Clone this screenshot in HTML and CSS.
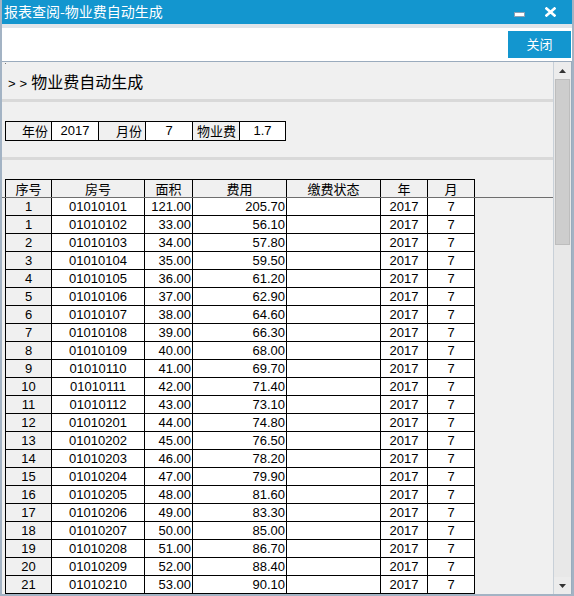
FILE: index.html
```html
<!DOCTYPE html>
<html>
<head>
<meta charset="utf-8">
<link rel="stylesheet" href="styles.css">
</head>
<body>
<div class="window">
  <div class="titlebar">
    <span class="title">报表查阅-物业费自动生成</span>
    <span class="controls">
      <span class="min"></span>
      <svg class="close" width="11" height="10" viewBox="0 0 11 10"><path d="M1.5 1.5 L9.5 8.5 M9.5 1.5 L1.5 8.5" stroke="#fff" stroke-width="2.6" stroke-linecap="square"/></svg>
    </span>
  </div>
  <div class="band"></div>
  <div class="toolbar">
    <button class="btn">关闭</button>
  </div>
  <div class="panel">
    <div class="content">
      <div class="dot"></div>
      <div class="heading"><span class="arrows">&gt;&gt;</span>物业费自动生成</div>
      <div class="sep"></div>
      <div class="params">
        <div class="pc lbl">年份</div>
        <div class="pc val">2017</div>
        <div class="pc lbl">月份</div>
        <div class="pc val">7</div>
        <div class="pc lbl">物业费</div>
        <div class="pc val">1.7</div>
      </div>
      <div class="sep sep2"></div>
      <div class="head-wrap">
        <div class="grid head">
          <div>序号</div><div>房号</div><div>面积</div><div>费用</div><div>缴费状态</div><div>年</div><div>月</div>
        </div>
      </div>
      <div class="grid body" id="rows"></div>
    </div>
    <div class="scrollbar">
      <div class="sb-btn up"><svg width="7" height="4" viewBox="0 0 7 4"><path d="M0 4 L3.5 0 L7 4Z" fill="#333"/></svg></div>
      <div class="thumb"></div>
      <div class="track"></div>
      <div class="sb-btn down"><svg width="7" height="4" viewBox="0 0 7 4"><path d="M0 0 L3.5 4 L7 0Z" fill="#333"/></svg></div>
    </div>
  </div>
</div>
<script>
var data=[
["1","01010101","121.00","205.70"],
["1","01010102","33.00","56.10"],
["2","01010103","34.00","57.80"],
["3","01010104","35.00","59.50"],
["4","01010105","36.00","61.20"],
["5","01010106","37.00","62.90"],
["6","01010107","38.00","64.60"],
["7","01010108","39.00","66.30"],
["8","01010109","40.00","68.00"],
["9","01010110","41.00","69.70"],
["10","01010111","42.00","71.40"],
["11","01010112","43.00","73.10"],
["12","01010201","44.00","74.80"],
["13","01010202","45.00","76.50"],
["14","01010203","46.00","78.20"],
["15","01010204","47.00","79.90"],
["16","01010205","48.00","81.60"],
["17","01010206","49.00","83.30"],
["18","01010207","50.00","85.00"],
["19","01010208","51.00","86.70"],
["20","01010209","52.00","88.40"],
["21","01010210","53.00","90.10"]
];
var h="";
data.forEach(function(r){
  h+='<div class="c idx">'+r[0]+'</div><div class="c">'+r[1]+'</div><div class="c num">'+r[2]+'</div><div class="c num">'+r[3]+'</div><div class="c"></div><div class="c">2017</div><div class="c">7</div>';
});
document.getElementById("rows").innerHTML=h;
</script>
</body>
</html>
```

FILE: styles.css
```css
html, body {
  margin: 0;
  padding: 0;
  width: 574px;
  height: 596px;
  overflow: hidden;
  background: #fff;
}
.window {
  width: 574px;
  height: 596px;
  box-sizing: border-box;
  border-left: 2px solid #a3b3c4;
  border-right: 2px solid #a3b3c4;
  border-bottom: 2px solid #a3b3c4;
  display: flex;
  flex-direction: column;
  font-family: "Liberation Sans", "Noto Sans CJK SC", sans-serif;
  overflow: hidden;
}
.titlebar {
  height: 24px;
  flex: none;
  margin: 0 -2px;
  background: #1396cf;
  color: #fff;
  display: flex;
  align-items: center;
  justify-content: space-between;
  padding-left: 4px;
  font-family: "Noto Sans CJK SC", sans-serif;
  font-size: 14px;
}
.title { line-height: 24px; margin-top: -2px; }
.controls {
  display: flex;
  align-items: center;
  gap: 20px;
  padding-right: 18px;
}
.min {
  display: block;
  width: 9px;
  height: 3px;
  background: #fff;
  border: 1px solid #8aa0b5;
  margin-top: 4px;
}
.close { display: block; margin-top: -1px; }
.band {
  height: 4px;
  flex: none;
  background: #e0e5ea;
}
.toolbar {
  height: 33px;
  flex: none;
  background: #fff;
  display: flex;
  justify-content: flex-end;
  align-items: flex-start;
  padding-top: 3px;
  padding-right: 1px;
  box-sizing: border-box;
}
.btn {
  width: 63px;
  height: 27px;
  border: none;
  background: #1396cf;
  color: #fff;
  font-family: "Noto Sans CJK SC", sans-serif;
  font-size: 13px;
  line-height: 25px;
  padding: 0 0 2px 0;
  margin: 0;
}
.panel {
  flex: 1;
  display: flex;
  border-top: 1px solid #9aabbd;
  border-right: 1px solid #9aabbd;
  background: #f0f0f0;
  min-height: 0;
}
.content {
  flex: 1;
  position: relative;
  min-width: 0;
}
.dot {
  position: absolute;
  left: 3px;
  top: 1px;
  width: 1px;
  height: 1px;
  background: #777;
}
.heading {
  height: 37px;
  box-sizing: border-box;
  padding: 10px 0 0 6px;
  line-height: 18px;
  font-size: 16px;
  font-family: "Noto Sans CJK SC", sans-serif;
  color: #000;
}
.arrows {
  letter-spacing: 4px;
  font-family: "Liberation Sans", sans-serif;
  font-size: 13px;
}
.sep {
  height: 3px;
  background: #d9d9d9;
  margin-bottom: 19px;
}
.sep2 { margin-top: 16px; }
.params {
  display: grid;
  grid-template-columns: 46px 47px 47px 47px 47px 46px;
  width: max-content;
  margin-left: 3px;
  border-left: 1px solid #000;
  border-top: 1px solid #000;
}
.pc {
  height: 18px;
  line-height: 18px;
  border-right: 1px solid #000;
  border-bottom: 1px solid #000;
  font-size: 13px;
  font-family: "Liberation Sans", "Noto Sans CJK SC", sans-serif;
  text-align: center;
  background: #fff;
}
.pc.lbl {
  background: #f0f0f0;
  text-align: right;
  padding-right: 3px;
  font-family: "Noto Sans CJK SC", sans-serif;
  font-size: 13px;
}
.head-wrap {
  border-bottom: 1px solid #6e6e6e;
}
.grid {
  display: grid;
  grid-template-columns: 46px 93px 48px 94px 94px 47px 47px;
  width: max-content;
  margin-left: 3px;
  border-left: 1px solid #000;
}
.grid.head {
  border-top: 1px solid #000;
}
.grid.head > div {
  height: 17px;
  line-height: 17px;
  border-right: 1px solid #000;
  background: #f0f0f0;
  text-align: center;
  font-family: "Noto Sans CJK SC", sans-serif;
  font-size: 13px;
}
.c {
  height: 17px;
  line-height: 17px;
  border-right: 1px solid #000;
  border-bottom: 1px solid #000;
  background: #fff;
  text-align: center;
  font-size: 13px;
  font-family: "Liberation Sans", sans-serif;
}
.c.idx { background: #f0f0f0; }
.c.num { text-align: right; padding-right: 1px; }
.scrollbar {
  width: 17px;
  flex: none;
  display: flex;
  flex-direction: column;
  background: #e8e8e8;
  border-left: 1px solid #c8d0d8;
}
.sb-btn {
  height: 17px;
  flex: none;
  display: flex;
  align-items: center;
  justify-content: center;
  background: #ececec;
}
.thumb {
  height: 166px;
  flex: none;
  margin: 0 1px;
  background: #cdcdcd;
  border: 1px solid #bdbdbd;
  box-sizing: border-box;
}
.track { flex: 1; }
```
